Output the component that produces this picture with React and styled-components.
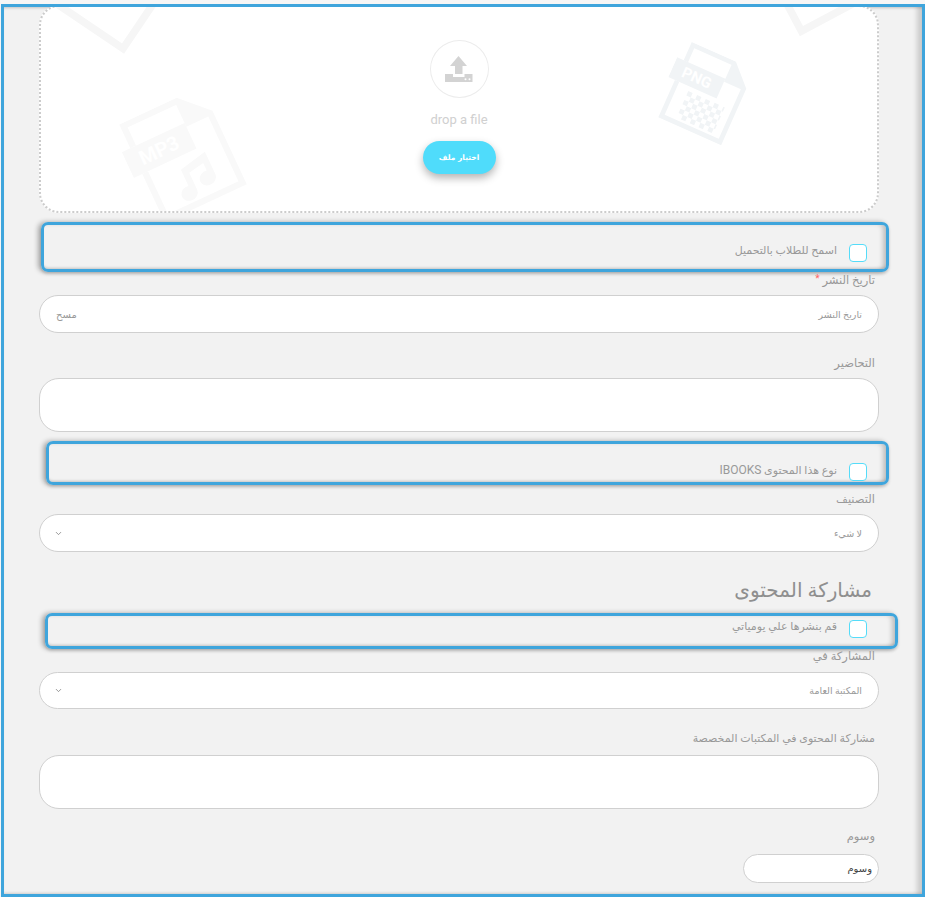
import styled, { createGlobalStyle } from 'styled-components'
import { ChevronDown } from 'lucide-react'

const Global = createGlobalStyle`
  html, body {
    margin: 0;
    background: #f6f6f6;
  }
  * {
    box-sizing: border-box;
  }
`

const Frame = styled.div`
  direction: rtl;
  width: 924px;
  height: 893px;
  margin: 4px 0 0 1px;
  padding: 0 43px 0 35px;
  border: 3px solid #3fa5dc;
  background: #f2f2f2;
  box-shadow: inset -8px 0 5px -3px rgba(0, 0, 0, 0.16), inset 0 3px 3px -2px rgba(0, 0, 0, 0.18), inset 0 -3px 3px -2px rgba(0, 0, 0, 0.14);
  overflow: hidden;
  font-family: Roboto, "DejaVu Sans", sans-serif;
  color: #999;
`

const Dropzone = styled.div`
  position: relative;
  height: 208px;
  margin-top: -2px;
  border: 2px dotted #ccc;
  border-radius: 20px;
  background: #fff;
  overflow: hidden;
  display: flex;
  flex-direction: column;
  align-items: center;
  padding-top: 33px;
`

const Mark = styled.svg`
  position: absolute;
  left: ${p => p.$x}px;
  top: ${p => p.$y}px;
  transform: rotate(${p => p.$r}deg);
  color: ${p => p.$c || '#f6f6f6'};
`

const UploadCircle = styled.div`
  position: relative;
  width: 59px;
  height: 58px;
  border: 1px solid #ececec;
  border-radius: 50%;
  background: #fff;
  display: flex;
  align-items: center;
  justify-content: center;
`

const DropText = styled.div`
  position: relative;
  direction: ltr;
  margin-top: 13px;
  font: 400 13px/18px Roboto, sans-serif;
  color: #d0d0d0;
`

const PickButton = styled.button`
  position: relative;
  width: 73px;
  height: 33px;
  margin-top: 12px;
  border: 0;
  border-radius: 17px;
  background: #4fdcfb;
  box-shadow: 0 4px 8px rgba(0, 0, 0, 0.3);
  color: #fff;
  font: 700 7.5px "DejaVu Sans", sans-serif;
`

const Callout = styled.div`
  display: flex;
  align-items: flex-start;
  gap: 12px;
  height: ${p => p.$h}px;
  margin: ${p => p.$top}px ${p => p.$right}px 0 ${p => p.$left}px;
  padding: ${p => p.$pad}px ${p => p.$inset || 19}px 0 0;
  border: 3px solid #3fa5dc;
  border-radius: 7px;
  box-shadow: -3px 0 5px rgba(0, 0, 0, 0.3), 0 2px 3px rgba(0, 0, 0, 0.15), inset -5px 0 5px -2px rgba(0, 0, 0, 0.22), inset 0 -3px 3px -2px rgba(0, 0, 0, 0.15);
`

const Check = styled.span`
  flex: none;
  width: 18px;
  height: 18px;
  border: 1px solid #55dcf9;
  border-radius: 4px;
  background: #fff;
`

const CheckLabel = styled.span`
  font-size: 11px;
  line-height: 14px;
  color: #999;
`

const Latin = styled.span`
  font-size: 12px;
`

const Label = styled.div`
  margin: ${p => p.$top}px 4px 0 0;
  font-size: ${p => p.$size || 11.5}px;
  line-height: 16px;
  color: #999;
`

const Star = styled.span`
  font-size: 10px;
  line-height: 0;
  vertical-align: 2px;
  color: #f66;
`

const Field = styled.div`
  display: flex;
  align-items: center;
  justify-content: space-between;
  width: ${p => (p.$w ? `${p.$w}px` : 'auto')};
  height: ${p => p.$h}px;
  margin-top: ${p => p.$top}px;
  padding: 0 16px 0 14px;
  border: 1px solid #d0d0d0;
  border-radius: 20px;
  background: #fff;
  font-size: ${p => p.$size || 9.5}px;
  color: #999;
`

const Clear = styled.span`
  margin-left: 2px;
  font-size: 10px;
`

const Dark = styled.span`
  margin-right: -10px;
  font-size: 10px;
  color: #444;
`

const Heading = styled.h3`
  margin: 23px 7px 0 0;
  font-size: 20px;
  font-weight: 400;
  line-height: 30px;
  color: #8f8f8f;
`

// faint file drawing behind the drop area, s is the scale of the 96x104 box
const FileMark = ({ label, x, y, r, c, s, children }) => (
  <Mark $x={x} $y={y} $r={r} $c={c} width={96 * s} height={104 * s} viewBox="0 0 96 104">
    <path fill="none" stroke="currentColor" strokeWidth="6" d="M12 25V3H68L92 27V100H12V52" />
    <path fill="currentColor" d="M66 2L93 29H66Z" />
    <rect x="0" y="25" width="66" height="27" fill="currentColor" />
    <text x="33" y="45" textAnchor="middle" fontFamily="Roboto, sans-serif" fontWeight="700" fontSize="19" fill="#fff">{label}</text>
    {children}
  </Mark>
)

const App = () => {
  return (
    <Frame>
      <Global />
      <Dropzone>
        <FileMark x={10} y={-104} r={34} s={1.25} />
        <FileMark x={712} y={-115} r={-28} s={1.25} />
        <FileMark label="MP3" x={88} y={95} r={-25} c="#f9f9f9" s={1.05}>
          <path fill="currentColor" d="M44 88V64L72 58V82a8 7 0 1 1-6-7V67L50 70V88a8 7 0 1 1-6-7Z" />
        </FileMark>
        <FileMark label="PNG" x={624} y={44} r={24} c="#f1f4f6" s={0.8}>
          <path fill="none" stroke="currentColor" strokeWidth="6" strokeDasharray="6 6" d="M30 61H80M36 67H80M30 73H80M36 79H80M30 85H80M36 91H80" />
        </FileMark>
        <UploadCircle>
          <svg width="28" height="27" viewBox="0 0 28 27">
            <path fill="#d3d3d3" d="M13.5 0L22 10H17.500V18H10V10H5ZM0 18H8V21H19.500V18H27.500V26H0Z" />
            <circle cx="20.500" cy="23.200" r="1" fill="#fff" />
            <circle cx="24.500" cy="23.200" r="1" fill="#fff" />
          </svg>
        </UploadCircle>
        <DropText>drop a file</DropText>
        <PickButton>اختيار ملف</PickButton>
      </Dropzone>

      <Callout $h={50} $top={9} $right={-10} $left={2} $pad={19}>
        <Check />
        <CheckLabel>اسمح للطلاب بالتحميل</CheckLabel>
      </Callout>

      <Label $top={0}>تاريخ النشر <Star>*</Star></Label>
      <Field $h={38} $top={7}>
        <span>تاريخ النشر</span>
        <Clear>مسح</Clear>
      </Field>

      <Label $top={22}>التحاضير</Label>
      <Field $h={54} $top={7} />

      <Callout $h={44} $top={9} $right={-10} $left={7} $pad={19}>
        <Check />
        <CheckLabel>نوع هذا المحتوى <Latin>IBOOKS</Latin></CheckLabel>
      </Callout>

      <Label $top={6}>التصنيف</Label>
      <Field $h={38} $top={7}>
        <span>لا شيء</span>
        <ChevronDown size={9} color="#777" />
      </Field>

      <Heading>مشاركة المحتوى</Heading>

      <Callout $h={36} $top={8} $right={-19} $left={6} $pad={4} $inset={28}>
        <Check />
        <CheckLabel>قم بنشرها علي يومياتي</CheckLabel>
      </Callout>

      <Label $top={-1}>المشاركة في</Label>
      <Field $h={37} $top={8}>
        <span>المكتبة العامة</span>
        <ChevronDown size={9} color="#777" />
      </Field>

      <Label $top={22} $size={11}>مشاركة المحتوى في المكتبات المخصصة</Label>
      <Field $h={54} $top={8} />

      <Label $top={19}>وسوم</Label>
      <Field $h={29} $w={136} $top={10}>
        <Dark>وسوم</Dark>
      </Field>
    </Frame>
  )
}

export default App
